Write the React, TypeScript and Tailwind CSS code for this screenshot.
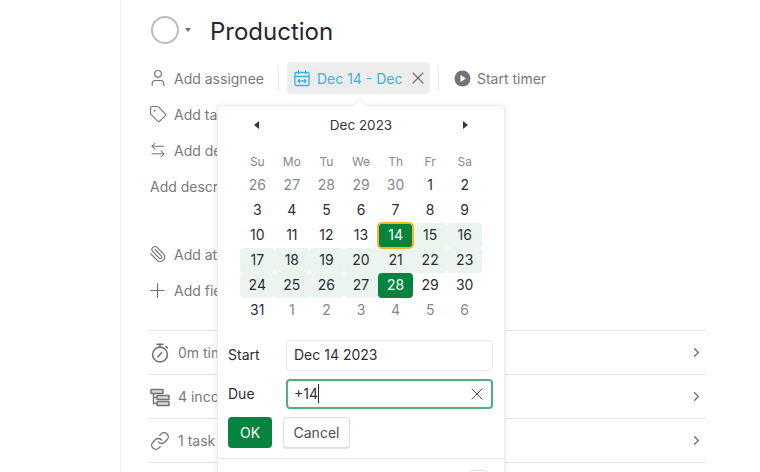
import { Plus, Paperclip, ArrowLeftRight, Tag, User, X, Link, ChevronRight } from 'lucide-react';

const weekDays = ['Su', 'Mo', 'Tu', 'We', 'Th', 'Fr', 'Sa'];

const inRange = 'bg-[#ebf4ef] rounded-[4px]';
const picked = 'bg-[#06843f] text-white rounded-[4px]';

const days: { n: number; muted?: boolean; cls?: string }[] = [
  { n: 26, muted: true }, { n: 27, muted: true }, { n: 28, muted: true }, { n: 29, muted: true }, { n: 30, muted: true }, { n: 1 }, { n: 2 },
  { n: 3 }, { n: 4 }, { n: 5 }, { n: 6 }, { n: 7 }, { n: 8 }, { n: 9 },
  { n: 10 }, { n: 11 }, { n: 12 }, { n: 13 },
  { n: 14, cls: picked + ' relative z-10 outline-2 outline-[#f5b62b] -outline-offset-1' },
  { n: 15, cls: inRange }, { n: 16, cls: inRange },
  { n: 17, cls: inRange }, { n: 18, cls: inRange }, { n: 19, cls: inRange }, { n: 20, cls: inRange },
  { n: 21, cls: 'bg-[#ebf4ef]' }, { n: 22, cls: inRange }, { n: 23, cls: inRange },
  { n: 24, cls: inRange }, { n: 25, cls: inRange }, { n: 26, cls: inRange }, { n: 27, cls: inRange },
  { n: 28, cls: picked }, { n: 29 }, { n: 30 },
  { n: 31 }, { n: 1, muted: true }, { n: 2, muted: true }, { n: 3, muted: true }, { n: 4, muted: true }, { n: 5, muted: true }, { n: 6, muted: true },
];

function Stopwatch() {
  return (
    <svg width="20" height="20" viewBox="0 0 20 20" fill="none" stroke="#707377" strokeWidth="1.6" strokeLinecap="round">
      <circle cx="10" cy="11.5" r="7.4" />
      <path d="M7 1.2h6M10 1.2V4M16 3.6l1.4 1.4M7.8 13.8l3.8-4" />
    </svg>
  );
}

function Subtasks() {
  return (
    <svg width="20" height="20" viewBox="0 0 20 20" fill="#d9d9d9" stroke="#707377" strokeWidth="1.5">
      <rect x="1" y="2.5" width="12" height="4" rx="0.5" />
      <path d="M3.5 6.5v10H7M3.5 10.5H7" fill="none" />
      <rect x="7" y="8.5" width="12" height="4" rx="0.5" />
      <rect x="7" y="14.5" width="12" height="4" rx="0.5" />
    </svg>
  );
}

function CalendarRange() {
  return (
    <svg width="16" height="17" viewBox="0 0 16 17" fill="none" stroke="#3db2e3" strokeWidth="1.3" strokeLinecap="round" strokeLinejoin="round">
      <rect x="1" y="2.5" width="14" height="13" rx="1" />
      <path d="M1 6.5h14M4.5 1v2.5M11.5 1v2.5M4 11h8M5.5 9.5 4 11l1.5 1.5M10.5 9.5 12 11l-1.5 1.5" />
    </svg>
  );
}

function PlayCircle() {
  return (
    <svg width="17" height="17" viewBox="0 0 17 17">
      <circle cx="8.5" cy="8.5" r="8" fill="#707377" />
      <path d="M6.5 5v7l5.5-3.5z" fill="#fff" />
    </svg>
  );
}

function Caret({ dir }: { dir: 'left' | 'right' | 'down' }) {
  if (dir === 'down') return <span className="w-0 h-0 border-x-[3.5px] border-x-transparent border-t-[4px] border-t-[#6b6e72]" />;
  if (dir === 'left') return <span className="w-0 h-0 border-y-[4px] border-y-transparent border-r-[5px] border-r-[#33373c]" />;
  return <span className="w-0 h-0 border-y-[4px] border-y-transparent border-l-[5px] border-l-[#33373c]" />;
}

function MetaRow({ icon, label }: { icon: React.ReactNode; label: string }) {
  return (
    <div className="h-9 flex items-center gap-[7px] text-[#777a7e]">
      <span className="w-[19px] flex justify-center">{icon}</span>
      <span>{label}</span>
    </div>
  );
}

function SummaryRow({ icon, label }: { icon: React.ReactNode; label: string }) {
  return (
    <div className="h-11 border-t border-[#e6e6e6] flex items-center text-[#777a7e]">
      <span className="w-[30px] pl-[2px] flex">{icon}</span>
      <span className="flex-1">{label}</span>
      <ChevronRight size={15} color="#6b6e72" strokeWidth={2} className="mr-[2px]" />
    </div>
  );
}

export default function App() {
  return (
    <div className="h-[472px] w-[760px] overflow-hidden bg-white flex text-[14px] text-[#2b2f33]" style={{ fontFamily: 'Inter, sans-serif' }}>
      <div className="w-[121px] border-r border-[#ececec] shrink-0" />

      <div className="relative flex-1 pl-[27px] pr-[54px] pt-[16px]">
        {/* Titulo */}
        <div className="flex items-center h-[28px] pl-[3px]">
          <span className="w-[28px] h-[28px] rounded-full border-[2px] border-[#bdbdbd]" />
          <span className="ml-[6px] mr-[19px] flex"><Caret dir="down" /></span>
          <h1 className="text-[24px] text-[#23272b] leading-none pt-[3px]">Production</h1>
        </div>

        {/* Barra de acciones */}
        <div className="mt-[18px] flex items-center h-[32px]">
          <User size={20} color="#707377" strokeWidth={1.4} />
          <span className="ml-[6px] text-[#777a7e]">Add assignee</span>
          <span className="ml-[14px] w-px h-[25px] bg-[#e8e8e8]" />
          <div className="ml-[8px] h-[32px] w-[143px] bg-[#ededed] rounded-[4px] flex items-center pl-[7px]">
            <CalendarRange />
            <span className="ml-[7px] text-[#3db2e3]">Dec 14 - Dec</span>
            <X size={20} color="#6b6e72" strokeWidth={1.3} className="ml-[5px] shrink-0" />
          </div>
          <span className="ml-[8px] w-px h-[25px] bg-[#e8e8e8]" />
          <span className="ml-[15px] flex"><PlayCircle /></span>
          <span className="ml-[6px] text-[#777a7e]">Start timer</span>
        </div>

        <div className="mt-[2px]">
          <MetaRow icon={<Tag size={18} color="#707377" strokeWidth={1.4} />} label="Add tags" />
          <MetaRow icon={<ArrowLeftRight size={18} color="#707377" strokeWidth={1.4} />} label="Add dependency" />
          <div className="h-9 pl-[2px] flex items-center text-[#777a7e]">Add description</div>
        </div>
        <div className="mt-[32px]">
          <MetaRow icon={<Paperclip size={18} color="#707377" strokeWidth={1.5} className="-scale-x-100" />} label="Add attachment" />
          <MetaRow icon={<Plus size={23} color="#707377" strokeWidth={1.2} className="shrink-0" />} label="Add field" />
        </div>

        <div className="mt-[22px]">
          <SummaryRow icon={<Stopwatch />} label="0m time tracked" />
          <SummaryRow icon={<Subtasks />} label="4 incomplete subtasks" />
          <SummaryRow icon={<Link size={20} color="#707377" strokeWidth={1.6} />} label="1 task linked" />
          <div className="border-t border-[#e6e6e6]" />
        </div>

        {/* Popover calendario */}
        <div className="absolute left-[96px] top-[105px] w-[288px] h-[380px] bg-white border border-[#ececec] rounded-[4px] shadow-[0_1px_6px_rgba(0,0,0,0.1)]">
          <span className="absolute left-[136px] -top-[6px] w-[11px] h-[11px] rotate-45 bg-white border-l border-t border-[#ececec]" />

          <div className="mt-[9px] ml-[22px] w-[242px] h-[20px] flex items-center justify-between pl-[14px] pr-[14px] text-[13.5px]">
            <Caret dir="left" />
            <span className="text-[#33373c]">Dec 2023</span>
            <Caret dir="right" />
          </div>

          <div className="mt-[17px] ml-[22px] w-[242px] grid grid-cols-7 text-center">
            {weekDays.map((d) => (
              <div key={d} className="h-[20px] leading-[20px] text-[12px] text-[#85888c]">{d}</div>
            ))}
          </div>
          <div className="mt-[1px] ml-[22px] w-[242px] grid grid-cols-7 text-center text-[14px]">
            {days.map((d, i) => (
              <div key={i} className={`h-[25px] leading-[24px] ${d.muted ? 'text-[#85888c]' : ''} ${d.cls ?? ''}`}>{d.n}</div>
            ))}
          </div>

          {/* Fechas */}
          <div className="mt-[17px] ml-[10px] mr-[11px] flex flex-col gap-[8px] text-[14px]">
            <div className="flex items-center">
              <label className="w-[58px] pb-[2px]">Start</label>
              <div className="flex-1 h-[31px] border border-[#e8e8e8] rounded-[4px] pl-[7px] pb-[2px] flex items-center">Dec 14 2023</div>
            </div>
            <div className="flex items-center">
              <label className="w-[58px] pb-[2px]">Due</label>
              <div className="flex-1 h-[30px] border-2 border-[#55ad7d] rounded-[4px] pl-[6px] pr-[4px] flex items-center justify-between">
                <span className="flex items-center pb-[2px]">+14<span className="w-px h-[19px] bg-[#2b2f33]" /></span>
                <X size={20} color="#4b4f53" strokeWidth={1.2} />
              </div>
            </div>
            <div className="flex items-center gap-[11px]">
              <button className="w-[44px] h-[31px] bg-[#06843f] text-white rounded-[4px]">OK</button>
              <button className="w-[67px] h-[31px] bg-white border border-[#e0e0e0] rounded-[4px] shadow-[0_1px_1px_rgba(0,0,0,0.12)] text-[#4b4f53]">Cancel</button>
            </div>
          </div>

          <div className="mt-[10px] border-t border-[#e8e8e8] flex justify-end pr-[15px] pt-[11px]">
            <span className="w-[20px] h-[20px] border border-[#e0e0e0] rounded-[4px]" />
          </div>
        </div>
      </div>
    </div>
  );
}
